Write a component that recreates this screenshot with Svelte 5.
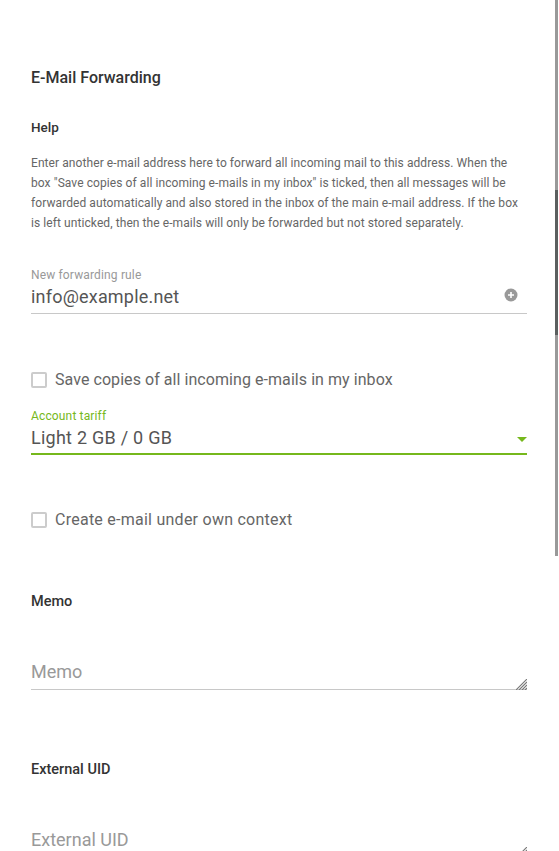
<script>
	let forward = "info@example.net";
	let tariff = "light";
	let saveCopies = false;
	let ownContext = false;
</script>

{#snippet hatch()}
	<svg class="hatch" viewBox="0 0 11 11" width="11" height="11">
		<path d="M11 0L0 11M11 3L3 11M11 6L6 11M11 9L9 11" stroke="#777" stroke-width="1.1" fill="none" />
	</svg>
{/snippet}

<div class="page">
	<div class="form">
		<h2 class="title">E-Mail Forwarding</h2>
		<h3 class="help-title">Help</h3>
		<p class="help">Enter another e-mail address here to forward all incoming mail to this address. When the box "Save copies of all incoming e-mails in my inbox" is ticked, then all messages will be forwarded automatically and also stored in the inbox of the main e-mail address. If the box is left unticked, then the e-mails will only be forwarded but not stored separately.</p>

		<label class="field rule">
			<span class="label">New forwarding rule</span>
			<input type="text" bind:value={forward} />
			<svg class="add" viewBox="0 0 14 14" width="14" height="14">
				<circle cx="7" cy="7" r="6.5" fill="#999" />
				<path d="M7 4v6M4 7h6" stroke="#fff" stroke-width="1.6" />
			</svg>
		</label>

		<label class="check first">
			<input type="checkbox" bind:checked={saveCopies} />
			<span>Save copies of all incoming e-mails in my inbox</span>
		</label>

		<div class="field select">
			<span class="label green">Account tariff</span>
			<div class="value">{tariff === "light" ? "Light 2 GB / 0 GB" : ""}</div>
			<span class="arrow"></span>
		</div>

		<label class="check second">
			<input type="checkbox" bind:checked={ownContext} />
			<span>Create e-mail under own context</span>
		</label>

		<h3 class="section memo-title">Memo</h3>
		<div class="area-wrap">
			<textarea class="area" placeholder="Memo" rows="1"></textarea>
			{@render hatch()}
		</div>

		<h3 class="section uid-title">External UID</h3>
		<div class="area-wrap">
			<textarea class="area" placeholder="External UID" rows="1"></textarea>
			{@render hatch()}
		</div>
	</div>
	<div class="scrollbar"><div class="thumb"></div></div>
</div>

<style>
	:global(body) {
		margin: 0;
		background: #fff;
		font-family: Roboto, "Liberation Sans", sans-serif;
		color: #555;
	}

	.page {
		position: relative;
		height: 851px;
		overflow: hidden;
	}

	.form {
		display: flex;
		flex-direction: column;
		padding: 68px 32px 0 31px;
	}

	.title {
		margin: 0;
		font-size: 16px;
		line-height: 19px;
		font-weight: 500;
		color: #333;
	}

	.help-title {
		margin: 32px 0 0;
		font-size: 13.5px;
		line-height: 16px;
		font-weight: 500;
		color: #333;
	}

	.help {
		margin: 18px 0 0;
		font-size: 12px;
		line-height: 20px;
		letter-spacing: 0.08px;
		color: #666;
	}

	.field {
		position: relative;
		display: block;
	}

	.label {
		display: block;
		margin-bottom: 3px;
		font-size: 12px;
		line-height: 14px;
		letter-spacing: 0.15px;
		color: #999;
	}

	.green {
		color: #76b81c;
	}

	.rule {
		margin-top: 35px;
		padding-bottom: 5px;
		border-bottom: 1px solid #c8c8c8;
	}

	.rule .label {
		margin-bottom: 2px;
	}

	.rule input {
		display: block;
		width: 100%;
		box-sizing: border-box;
		height: 24px;
		margin: 0;
		padding: 0;
		border: 0;
		outline: 0;
		background: none;
		font: inherit;
		font-size: 18px;
		letter-spacing: 0.2px;
		color: #555;
	}

	.add {
		position: absolute;
		right: 9px;
		top: 20px;
	}

	.check {
		display: flex;
		align-items: center;
		gap: 8px;
		font-size: 16px;
		line-height: 20px;
		letter-spacing: 0.06px;
		color: #666;
	}

	.check input {
		appearance: none;
		width: 16px;
		height: 16px;
		margin: 0;
		box-sizing: border-box;
		border: 2px solid #ccc;
		border-radius: 2px;
		background: #fff;
	}

	.first {
		margin-top: 56px;
	}

	.second {
		margin-top: 55px;
		letter-spacing: 0.25px;
	}

	.select {
		margin-top: 19px;
		padding-bottom: 3px;
		border-bottom: 2px solid #76b81c;
	}

	.value {
		height: 24px;
		line-height: 24px;
		font-size: 18px;
		letter-spacing: 0.25px;
		color: #555;
	}

	.arrow {
		position: absolute;
		right: 0;
		top: 28px;
		border: 5px solid transparent;
		border-top: 5px solid #76b81c;
		border-bottom: 0;
	}

	.section {
		margin: 0;
		font-size: 14.5px;
		line-height: 18px;
		font-weight: 500;
		color: #333;
	}

	.memo-title {
		margin-top: 63px;
	}

	.uid-title {
		margin-top: 71px;
	}

	.area-wrap {
		position: relative;
		margin-top: 47px;
	}

	.area {
		display: block;
		width: 100%;
		box-sizing: border-box;
		height: 32px;
		margin: 0;
		padding: 2px 0 0;
		border: 0;
		border-bottom: 1px solid #c8c8c8;
		outline: 0;
		resize: none;
		font: inherit;
		font-size: 18px;
		line-height: 24px;
		color: #555;
	}

	.area::placeholder {
		color: #999;
		opacity: 1;
	}

	.hatch {
		position: absolute;
		right: 0;
		bottom: 0;
	}

	.scrollbar {
		position: absolute;
		top: 0;
		right: 1px;
		width: 3px;
		height: 556px;
		background: #999;
	}

	.thumb {
		position: absolute;
		top: 190px;
		left: 0;
		width: 100%;
		height: 145px;
		background: #5b5f5f;
	}
</style>
